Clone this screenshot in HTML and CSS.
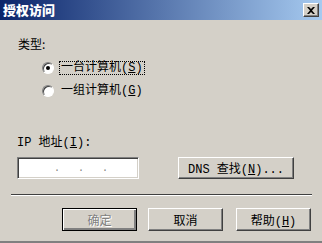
FILE: index.html
```html
<!DOCTYPE html>
<html lang="zh-CN">
<head>
  <meta charset="UTF-8" />
  <title>授权访问</title>
  <link rel="stylesheet" href="styles.css">
</head>
<body>

  <div class="dialog">
    <div class="title-bar">
      <span class="title">授权访问</span>
      <button class="close-btn">
        <svg width="8" height="7" viewBox="0 0 8 7">
          <path d="M0 0h2l2 2 2-2h2L5 3.5 8 7H6L4 5 2 7H0l3-3.5z" fill="#000"/>
        </svg>
      </button>
    </div>

    <div class="type-label">类型:</div>

    <div class="radios">
      <div class="radio-row">
        <span class="radio checked"></span>
        <span class="radio-text focused">一台计算机(<u>S</u>)</span>
      </div>
      <div class="radio-row">
        <span class="radio"></span>
        <span class="radio-text">一组计算机(<u>G</u>)</span>
      </div>
    </div>

    <div class="ip-label">IP 地址(<u>I</u>):</div>

    <div class="ip-row">
      <div class="ip-box">
        <span class="seg"></span><span class="dot">.</span>
        <span class="seg"></span><span class="dot">.</span>
        <span class="seg"></span><span class="dot">.</span>
        <span class="seg"></span>
      </div>
      <button class="btn dns-btn">DNS 查找(<u>N</u>)...</button>
    </div>

    <div class="separator"></div>

    <div class="actions">
      <button class="btn default" disabled>确定</button>
      <button class="btn cancel">取消</button>
      <button class="btn">帮助(<u>H</u>)</button>
    </div>
  </div>

</body>
</html>
```

FILE: styles.css
```css
body {
  margin: 0;
  background-color: #d4d0c8;
  font-family: "Liberation Mono", "Noto Sans CJK SC", monospace;
  font-size: 12px;
  color: #000;
}

.dialog {
  width: 322px;
  height: 243px;
  box-sizing: border-box;
  border-bottom: 2px solid #808080;
  overflow: hidden;
}

.title-bar {
  height: 20px;
  display: flex;
  align-items: center;
  justify-content: space-between;
  padding: 0 3px 0 3px;
  background: linear-gradient(to right, #0a246a, #a6caf0);
}

.title {
  color: #fff;
  font-family: "Noto Sans CJK SC", sans-serif;
  font-weight: 900;
  font-size: 13px;
  line-height: 20px;
}

.close-btn {
  width: 16px;
  height: 14px;
  padding: 0;
  display: flex;
  align-items: center;
  justify-content: center;
  background-color: #d4d0c8;
  border: 1px solid;
  border-color: #fff #404040 #404040 #fff;
  box-shadow: inset -1px -1px 0 #808080;
}

.type-label {
  margin-top: 17px;
  padding-left: 18px;
  line-height: 14px;
  font-family: "Noto Sans CJK SC", sans-serif;
}

.radios {
  margin-top: 10px;
  padding-left: 42px;
  display: flex;
  flex-direction: column;
  gap: 9px;
}

.radio-row {
  display: flex;
  align-items: center;
  height: 14px;
}

.radio {
  width: 10px;
  height: 10px;
  border-radius: 50%;
  background-color: #fff;
  border: 1px solid;
  border-color: #808080 #fff #fff #808080;
  box-shadow: inset 1px 1px 0 #404040;
  position: relative;
}

.radio.checked::after {
  content: "";
  position: absolute;
  left: 3px;
  top: 3px;
  width: 4px;
  height: 4px;
  border-radius: 50%;
  background-color: #000;
}

.radio-text {
  margin-left: 5px;
  padding: 0 1px;
  line-height: 12px;
  border: 1px dotted transparent;
}

.radio-text.focused {
  border-color: #000;
}

.ip-label {
  margin-top: 39px;
  padding-left: 17px;
  line-height: 12px;
}

.ip-row {
  margin-top: 8px;
  padding-left: 17px;
  display: flex;
}

.ip-box {
  width: 122px;
  height: 22px;
  box-sizing: border-box;
  display: flex;
  align-items: center;
  padding: 0 12px 0 18px;
  background-color: #fff;
  border: 1px solid;
  border-color: #808080 #fff #fff #808080;
  box-shadow: inset 1px 1px 0 #404040, inset -1px -1px 0 #d4d0c8;
}

.seg {
  flex: 1;
}

.dot {
  color: #808080;
  font-size: 10px;
}

.btn {
  width: 75px;
  height: 23px;
  padding: 0;
  font-family: "Liberation Mono", "Noto Sans CJK SC", monospace;
  font-size: 12px;
  color: #000;
  background-color: #d4d0c8;
  border: 1px solid;
  border-color: #fff #404040 #404040 #fff;
  box-shadow: inset -1px -1px 0 #808080;
}

.dns-btn {
  width: 116px;
  height: 22px;
  margin-left: 39px;
}

.btn.default {
  margin-right: 11px;
  border: 1px solid #000;
  box-shadow: inset 1px 1px 0 #fff, inset -2px -2px 0 #808080;
}

.btn.cancel {
  margin-right: 13px;
}

.btn:disabled {
  color: #808080;
  text-shadow: 1px 1px 0 #fff;
}

.separator {
  margin: 15px 10px 0 11px;
  border-top: 1px solid #404040;
  border-bottom: 1px solid #fff;
}

.actions {
  margin-top: 12px;
  padding-right: 11px;
  display: flex;
  justify-content: flex-end;
}
```
